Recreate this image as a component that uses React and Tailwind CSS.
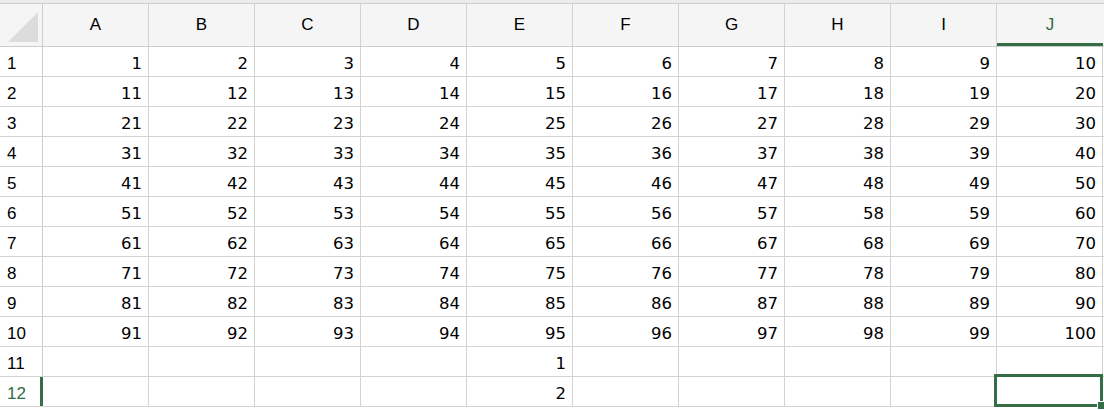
import React from 'react';

const cols = ['A', 'B', 'C', 'D', 'E', 'F', 'G', 'H', 'I', 'J'];

const rows = [
  ...Array.from({ length: 10 }, (_, r) => cols.map((_, c) => r * 10 + c + 1)),
  [null, null, null, null, 1, null, null, null, null, null],
  [null, null, null, null, 2, null, null, null, null, null],
];

const App = () => {
  return (
    <div className="relative w-[1104px] h-[410px] overflow-hidden bg-white text-black">
      {/* top strip */}
      <div className="h-[3px] bg-[#ececec]" />

      {/* column header row */}
      <div className="flex h-[44px] border-y border-[#cccccc] bg-[#f5f5f5] font-['Liberation_Sans',sans-serif] text-[17px]">
        <div className="w-[43px] shrink-0 border-r border-[#cccccc] relative">
          <svg className="absolute left-[8px] top-[8px]" width="30" height="30" viewBox="0 0 30 30">
            <polygon points="30,0 30,30 0,30" fill="#dcdcdc" />
          </svg>
        </div>
        {cols.map((c) => (
          <div
            key={c}
            className={
              c === 'J'
                ? "w-[106px] shrink-0 flex items-center justify-center text-[#2f6b45] border-b-[3px] border-[#356d47] pt-[3px]"
                : "w-[106px] shrink-0 flex items-center justify-center border-r border-[#d2d2d2]"
            }
          >
            {c}
          </div>
        ))}
      </div>

      {/* data rows */}
      {rows.map((row, r) => (
        <div key={r} className="flex h-[30px] border-b border-[#d2d2d2]">
          <div
            className={
              r === 11
                ? "w-[43px] shrink-0 border-r-[3px] border-[#356d47] pl-[7px] pt-[5px] flex items-center text-[17px] text-[#2f6b45] font-['Liberation_Sans',sans-serif]"
                : "w-[43px] shrink-0 border-r border-[#cccccc] pl-[7px] pt-[5px] flex items-center text-[17px] font-['Liberation_Sans',sans-serif]"
            }
          >
            {r + 1}
          </div>
          {row.map((v, c) => (
            <div
              key={c}
              className="w-[106px] shrink-0 border-r border-[#d2d2d2] flex items-center justify-end pr-[6px] pt-[6px] text-[16.5px] font-['DejaVu_Sans',sans-serif]"
            >
              {v}
            </div>
          ))}
        </div>
      ))}

      {/* selected cell J12 */}
      <div className="absolute left-[994px] top-[374px] w-[109px] h-[33px] border-[3px] border-[#356d47]" />
      <div className="absolute left-[1097px] top-[401px] w-[8px] h-[9px] bg-[#356d47] border border-white" />
    </div>
  );
};

export default App;
